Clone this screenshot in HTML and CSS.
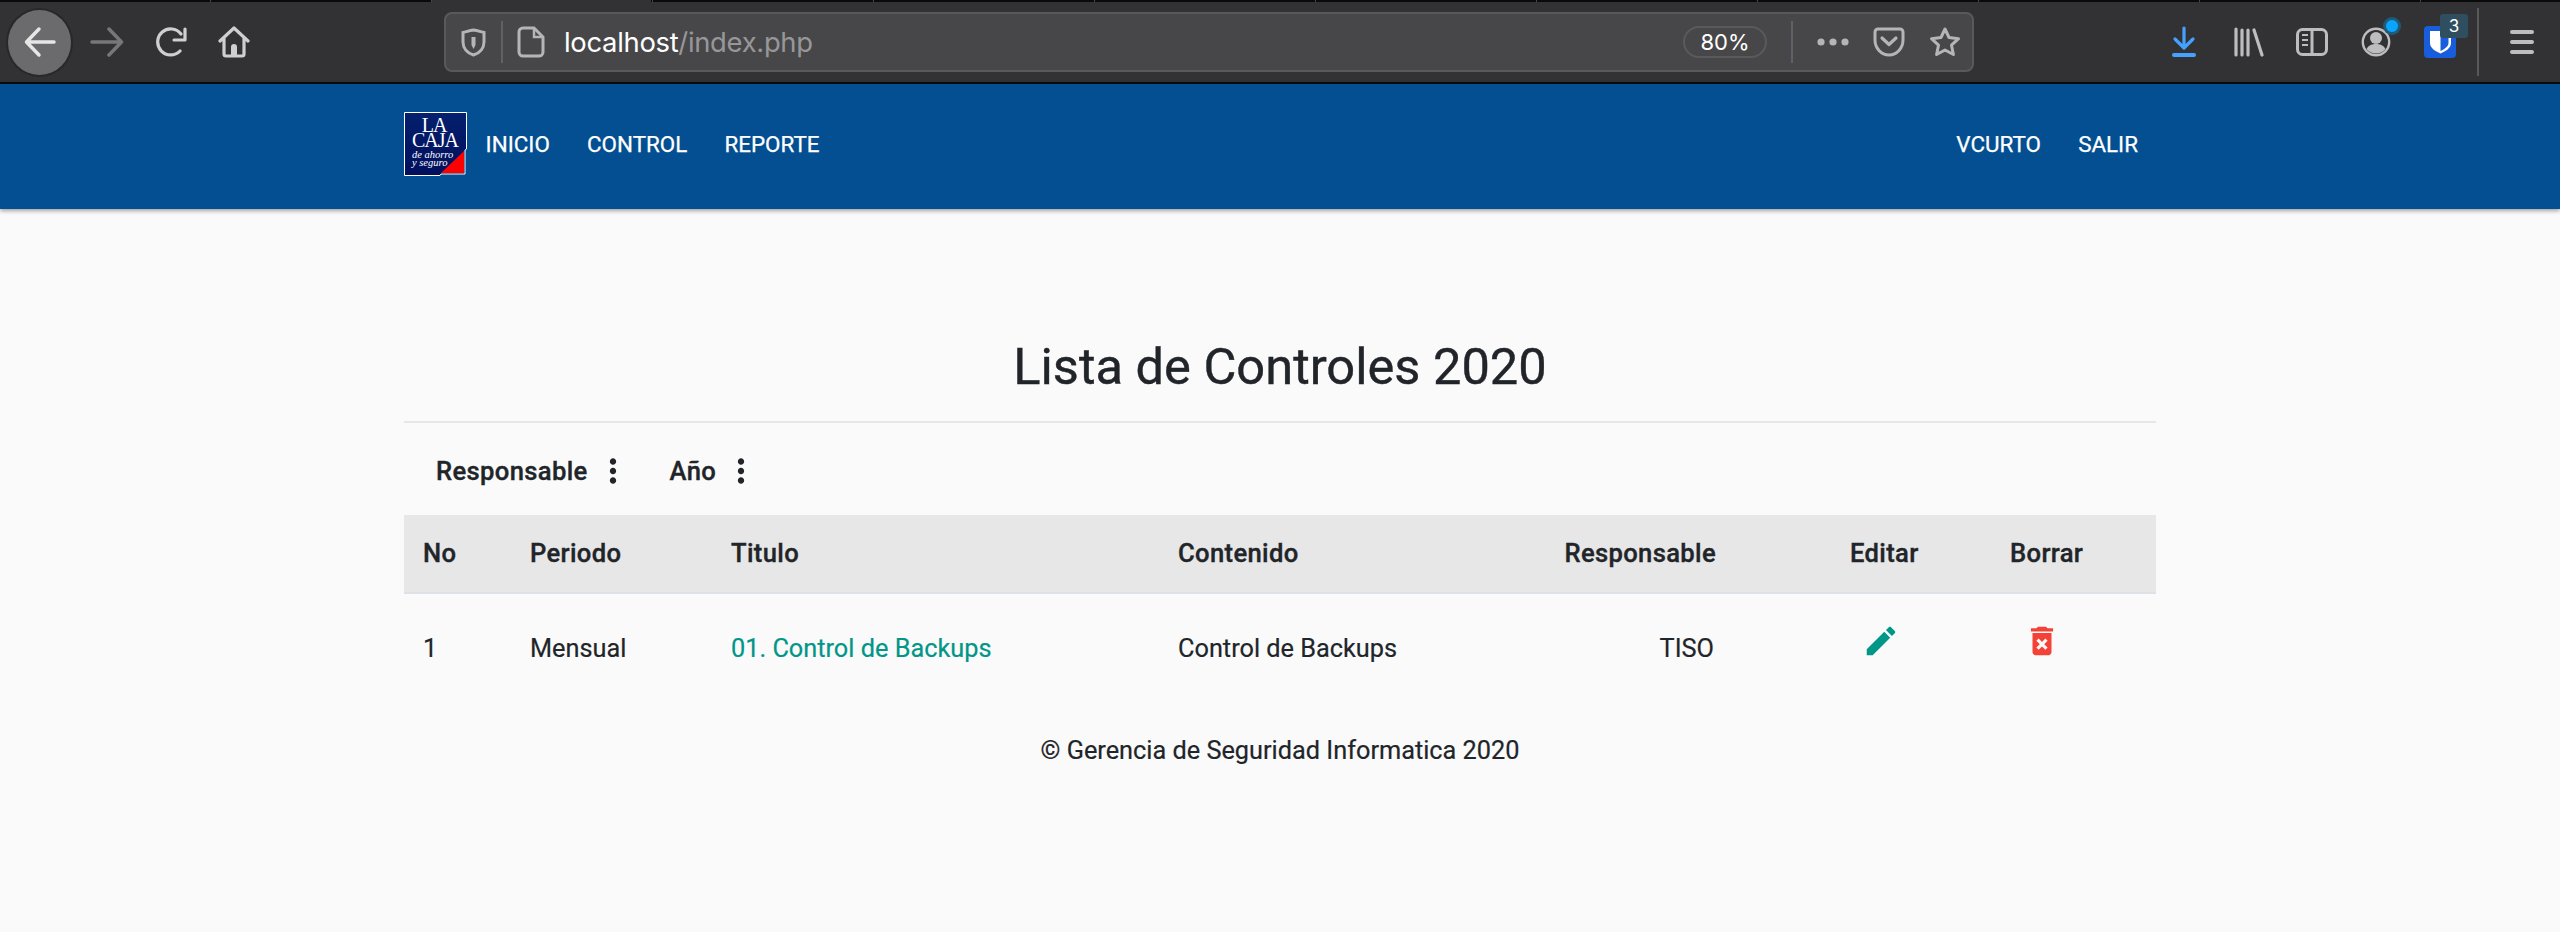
FILE: index.html
```html
<!DOCTYPE html>
<html lang="es">
<head>
<meta charset="utf-8">
<title>Lista de Controles 2020</title>
<link rel="stylesheet" href="styles.css">
</head>
<body>
<header class="chrome">
  <div class="tabstrip"></div>
  <div class="toolbar">
    <span class="back-btn">
      <svg class="ic" width="34" height="34" viewBox="0 0 34 34"><path d="M31 17H4M16 4L3.500 17 16 30" fill="none" stroke="#e6e6e6" stroke-width="3.500" stroke-linecap="round" stroke-linejoin="round"/></svg>
    </span>
    <svg class="ic fwd" width="34" height="30" viewBox="0 0 34 30"><path d="M2 15h29M19 2l12.500 13L19 28" fill="none" stroke="#77777a" stroke-width="3.500" stroke-linecap="round" stroke-linejoin="round"/></svg>
    <svg class="ic reload" width="32" height="30" viewBox="0 0 32 30"><path d="M25 24a13 13 0 1 1 1-17" fill="none" stroke="#cfcfd1" stroke-width="3.200" stroke-linecap="round"/><path d="M30 2v11H19" fill="none" stroke="#cfcfd1" stroke-width="3.200" stroke-linecap="round" stroke-linejoin="round"/></svg>
    <svg class="ic home" width="32" height="32" viewBox="0 0 32 32"><path d="M2 15L16 2l14 13M6 12v16a2 2 0 0 0 2 2h16a2 2 0 0 0 2-2V12" fill="none" stroke="#cfcfd1" stroke-width="3.200" stroke-linecap="round" stroke-linejoin="round"/><path d="M13 30v-9a3 3 0 0 1 6 0v9z" fill="#cfcfd1"/></svg>
    <div class="urlbar">
      <svg class="ic shield" width="25" height="29" viewBox="0 0 25 29"><path d="M2 4.500C6 3.500 9 2.500 12.500 2 16 2.500 19 3.500 23 4.500V14c0 6-4 11-10.500 13C6 25 2 20 2 14z" fill="none" stroke="#b5b5b7" stroke-width="3"/><path d="M10.500 9h4v8l-2 4-2-4z" fill="#b5b5b7"/></svg>
      <span class="sep"></span>
      <svg class="ic page" width="28" height="32" viewBox="0 0 28 32"><path d="M6 2h11l9 9v15a4 4 0 0 1-4 4H6a4 4 0 0 1-4-4V6a4 4 0 0 1 4-4z" fill="none" stroke="#b5b5b7" stroke-width="3"/><path d="M17 2v9h9" fill="none" stroke="#b5b5b7" stroke-width="2.500"/></svg>
      <span class="url"><span class="host">localhost</span><span class="path">/index.php</span></span>
      <span class="zoom-pill">80%</span>
      <span class="sep sep-right"></span>
      <svg class="ic dots" width="32" height="8" viewBox="0 0 32 8"><circle cx="4" cy="4" r="3.600" fill="#b5b5b7"/><circle cx="16" cy="4" r="3.600" fill="#b5b5b7"/><circle cx="28" cy="4" r="3.600" fill="#b5b5b7"/></svg>
      <svg class="ic pocket" width="32" height="30" viewBox="0 0 32 30"><path d="M2 5a3 3 0 0 1 3-3h22a3 3 0 0 1 3 3v8c0 8-6 15-14 15S2 21 2 13z" fill="none" stroke="#b5b5b7" stroke-width="3"/><path d="M9 11l7 6.500L23 11" fill="none" stroke="#b5b5b7" stroke-width="3.200" stroke-linecap="round" stroke-linejoin="round"/></svg>
      <svg class="ic star" width="32" height="32" viewBox="0 0 32 32"><path d="M16 3l4 8.500 9.500 1.200-7 6.500 1.900 9.300L16 24l-8.400 4.500 1.900-9.300-7-6.500L12 11.500z" fill="none" stroke="#b5b5b7" stroke-width="3" stroke-linejoin="round"/></svg>
    </div>
    <div class="tools">
      <svg class="ic dl" width="24" height="32" viewBox="0 0 24 32"><path d="M12 2v19M3 13l9 9 9-9" fill="none" stroke="#45a1ff" stroke-width="3.200" stroke-linecap="round" stroke-linejoin="round"/><rect y="27" width="24" height="4" rx="2" fill="#45a1ff"/></svg>
      <svg class="ic lib" width="30" height="30" viewBox="0 0 30 30"><path d="M2 2v26M8 3v25M14 3v25M20 3l8 25" fill="none" stroke="#bdbdbf" stroke-width="3.200" stroke-linecap="round"/></svg>
      <svg class="ic side" width="32" height="28" viewBox="0 0 32 28"><rect x="1.500" y="1.500" width="29" height="25" rx="5" fill="none" stroke="#bdbdbf" stroke-width="3"/><path d="M16 2v24" stroke="#bdbdbf" stroke-width="3"/><path d="M6 7h6M6 12h6M6 17h6" stroke="#bdbdbf" stroke-width="2"/></svg>
      <span class="account">
        <svg class="ic" width="30" height="30" viewBox="0 0 30 30"><circle cx="15" cy="15" r="13.200" fill="none" stroke="#bdbdbf" stroke-width="2.400"/><circle cx="15" cy="11" r="6" fill="#bdbdbf"/><path d="M5.500 22c2-4 6-5 9.500-5s7.500 1 9.500 5c-2.500 3-6 4.500-9.500 4.500S8 25 5.500 22z" fill="#bdbdbf"/></svg>
        <span class="notify"></span>
      </span>
      <span class="bitwarden">
        <svg class="ic" width="32" height="32" viewBox="0 0 32 32"><rect width="32" height="32" rx="4" fill="#175ddc"/><path d="M6 5h21v12c0 5-5 8-10.500 10.500C11 25 6 22 6 17z" fill="#fff"/><path d="M16.500 7.500H24.500V17c0 3.500-4 6-8 8z" fill="#175ddc"/></svg>
        <span class="badge">3</span>
      </span>
      <span class="sep-tools"></span>
      <svg class="ic burger" width="24" height="26" viewBox="0 0 24 26"><path d="M2 3h20M2 13h20M2 23h20" stroke="#bdbdbf" stroke-width="4" stroke-linecap="round"/></svg>
    </div>
  </div>
</header>

<nav class="navbar">
  <div class="nav-inner">
    <svg class="logo" width="63" height="64" viewBox="0 0 63 64">
      <defs>
        <linearGradient id="lg" x1="0" y1="0" x2="0" y2="1"><stop offset="0" stop-color="#04206e"/><stop offset="1" stop-color="#020f5c"/></linearGradient>
      </defs>
      <path d="M0.500 0.500H62.500V37L61 38V62H37L36 63.500H0.500z" fill="url(#lg)" stroke="#fff"/>
      <path d="M60 39V61H37z" fill="#f00"/>
      <text class="logo-big" text-anchor="middle"><tspan x="31.500" y="20">LA</tspan> <tspan x="31" y="35">CAJA</tspan></text>
      <text class="logo-small"><tspan x="8" y="46">de ahorro</tspan> <tspan x="8" y="54">y seguro</tspan></text>
    </svg>
    <a class="nav-link" href="#">INICIO</a>
    <a class="nav-link" href="#">CONTROL</a>
    <a class="nav-link" href="#">REPORTE</a>
    <span class="nav-space"></span>
    <a class="nav-link" href="#">VCURTO</a>
    <a class="nav-link" href="#">SALIR</a>
  </div>
</nav>

<main class="content">
  <h1 class="title">Lista de Controles 2020</h1>
  <hr class="rule">
  <div class="filters">
    <span class="filter">Responsable</span>
    <svg class="more" width="38" height="38" viewBox="0 0 24 24"><path d="M12 8c1.100 0 2-.9 2-2s-.9-2-2-2-2 .9-2 2 .9 2 2 2zm0 2c-1.100 0-2 .9-2 2s.9 2 2 2 2-.9 2-2-.9-2-2-2zm0 6c-1.100 0-2 .9-2 2s.9 2 2 2 2-.9 2-2-.9-2-2-2z"/></svg>
    <span class="filter filter-next">Año</span>
    <svg class="more" width="38" height="38" viewBox="0 0 24 24"><path d="M12 8c1.100 0 2-.9 2-2s-.9-2-2-2-2 .9-2 2 .9 2 2 2zm0 2c-1.100 0-2 .9-2 2s.9 2 2 2 2-.9 2-2-.9-2-2-2zm0 6c-1.100 0-2 .9-2 2s.9 2 2 2 2-.9 2-2-.9-2-2-2z"/></svg>
  </div>
  <table class="grid">
    <colgroup>
      <col class="c-no"><col class="c-per"><col class="c-tit"><col class="c-con"><col class="c-res"><col class="c-edi"><col class="c-bor">
    </colgroup>
    <thead>
      <tr>
        <th>No</th><th>Periodo</th><th>Titulo</th><th>Contenido</th><th class="right">Responsable</th><th class="edit-col">Editar</th><th>Borrar</th>
      </tr>
    </thead>
    <tbody>
      <tr>
        <td>1</td>
        <td>Mensual</td>
        <td><a class="link" href="#">01. Control de Backups</a></td>
        <td>Control de Backups</td>
        <td class="right">TISO</td>
        <td class="edit-col icon-cell"><svg class="pencil" width="38" height="38" viewBox="0 0 24 24"><path d="M3 17.250V21h3.750L17.810 9.940l-3.750-3.750L3 17.250zM20.710 7.040c.39-.39.39-1.020 0-1.410l-2.340-2.340c-.39-.39-1.020-.39-1.410 0l-1.830 1.830 3.750 3.750 1.830-1.830z"/></svg></td>
        <td class="icon-cell"><svg class="trash" width="38" height="38" viewBox="0 0 24 24"><path d="M6 19c0 1.100.9 2 2 2h8c1.100 0 2-.9 2-2V7H6v12zm2.460-7.120l1.410-1.410L12 12.590l2.120-2.120 1.410 1.410L13.410 14l2.120 2.120-1.410 1.410L12 15.410l-2.120 2.120-1.410-1.410L10.590 14l-2.130-2.120zM15.500 4l-1-1h-5l-1 1H5v2h14V4z"/></svg></td>
      </tr>
    </tbody>
  </table>
  <p class="footer">© Gerencia de Seguridad Informatica 2020</p>
</main>
</body>
</html>
```
FILE: styles.css
```css
* { box-sizing: border-box; }
html, body { margin: 0; height: 100%; }
body {
  background: #fafafa;
  color: #212529;
  font-family: Roboto, "Liberation Sans", sans-serif;
  font-size: 25.3px;
  overflow: hidden;
}
.ic { display: block; flex: none; }

/* browser chrome */
.chrome { height: 84px; background: #323234; border-bottom: 2px solid #0b0b0c; }
.tabstrip {
  height: 2px;
  background:
    linear-gradient(#323234, #323234) 432px 0 / 219px 2px no-repeat,
    repeating-linear-gradient(90deg, #0a0a0a 0 220px, #47474a 220px 221px) -10px 0;
}
.toolbar { display: flex; align-items: center; height: 80px; padding-left: 8px; }
.back-btn {
  width: 63px; height: 65px; border-radius: 50%;
  background: #6b6b6d; box-shadow: 0 0 0 2px #28282a;
  display: flex; align-items: center; justify-content: center; flex: none;
}
.fwd { margin-left: 19px; }
.reload { margin-left: 31px; }
.home { margin-left: 31px; }
.urlbar {
  width: 1530px; height: 60px; margin-left: 194px;
  background: #474749; border: 2px solid #59595c; border-radius: 8px;
  display: flex; align-items: center; padding-left: 15px; flex: none;
}
.sep { width: 2px; height: 42px; background: #5f6168; margin-left: 15px; flex: none; }
.page { margin-left: 14px; }
.url { margin-left: 19px; font-family: Inter, Roboto, sans-serif; font-size: 27.4px; letter-spacing: -0.3px; white-space: nowrap; width: 1119px; flex: none; }
.host { color: #fff; }
.path { color: #97979a; }
.zoom-pill {
  width: 84px; height: 32px; border: 2px solid #5a5a5d; border-radius: 16px;
  color: #fff; font-family: Inter, Roboto, sans-serif; font-size: 22px;
  display: flex; align-items: center; justify-content: center; flex: none;
}
.sep-right { margin-left: 24px; }
.dots { margin-left: 24px; }
.pocket { margin-left: 24px; }
.star { margin-left: 24px; }
.tools { display: flex; align-items: center; margin-left: 198px; }
.lib { margin-left: 38px; }
.side { margin-left: 32px; }
.account { position: relative; margin-left: 33px; display: block; }
.notify {
  position: absolute; left: 25px; top: -7px; width: 12px; height: 12px;
  background: #0aa5ff; border-radius: 50%; box-shadow: 0 0 0 3px #1f5a78;
}
.bitwarden { position: relative; margin-left: 33px; display: block; }
.badge {
  position: absolute; left: 16px; top: -12px; width: 28px; height: 24px;
  background: #2f4f61; border-radius: 3px; color: #fff;
  font-family: Inter, Roboto, sans-serif; font-size: 17px; line-height: 24px; text-align: center;
}
.sep-tools { width: 2px; height: 68px; background: #58585a; margin-left: 21px; flex: none; }
.burger { margin-left: 31px; }

/* nav */
.navbar { height: 125px; background: #034f91; box-shadow: 0 2px 4px rgba(0,0,0,.35); }
.nav-inner { width: 1752px; height: 100%; margin: 0 auto; display: flex; align-items: center; }
.logo { display: block; flex: none; margin-top: -5px; }
.logo-big { font-family: "Liberation Serif", serif; font-size: 20px; letter-spacing: -1px; fill: #fff; }
.logo-small { font-family: "Liberation Serif", serif; font-style: italic; font-size: 10.500px; fill: #fff; }
.nav-link {
  color: #fff; text-decoration: none; font-size: 22.4px; font-weight: 400;
  padding: 0 18.600px; margin-top: -5px; -webkit-text-stroke: .25px #fff;
}
.nav-space { flex: 1; }
.nav-link:last-child { padding-right: 18px; }

/* content */
.content { width: 1752px; margin: 0 auto; -webkit-text-stroke: .2px; }
.title { margin: 127px 0 0; font-size: 50.600px; font-weight: 400; line-height: 61.500px; text-align: center; -webkit-text-stroke: .4px; }
.rule { margin: 23px 0 0; border: 0; border-top: 2px solid #e7e7e7; }
.filters { height: 92px; display: flex; align-items: center; padding-left: 32px; padding-top: 4px; }
.filter { font-weight: 500; font-size: 25.6px; letter-spacing: .35px; -webkit-text-stroke: .35px; }
.more { margin-left: 6px; fill: #212529; flex: none; }
.filter-next { margin-left: 38px; }
.grid { width: 100%; border-collapse: collapse; table-layout: fixed; }
.c-no { width: 107px; } .c-per { width: 201px; } .c-tit { width: 447px; }
.c-con { width: 351px; } .c-res { width: 225px; } .c-edi { width: 256px; } .c-bor { width: 165px; }
.grid th, .grid td { padding: 0 19px; text-align: left; }
.grid th { height: 78px; background: #e7e7e7; border-bottom: 2px solid #dee2e6; font-weight: 500; font-size: 25.6px; letter-spacing: .35px; -webkit-text-stroke: .35px; }
.grid td { height: 111px; color: #212529; }
.grid .right { text-align: right; }
.grid td.right { padding-right: 21px; }
.grid .edit-col { padding-left: 115px; }
.link { color: #009688; text-decoration: none; }
.icon-cell svg { display: block; margin-top: -16px; }
.grid .edit-col.icon-cell svg { margin-left: 12px; }
.grid .icon-cell:last-child svg { margin-left: 13px; }
.pencil { fill: #009688; }
.trash { fill: #f44336; }
.footer { margin: 32px 0 0; text-align: center; line-height: 30px; }
```
